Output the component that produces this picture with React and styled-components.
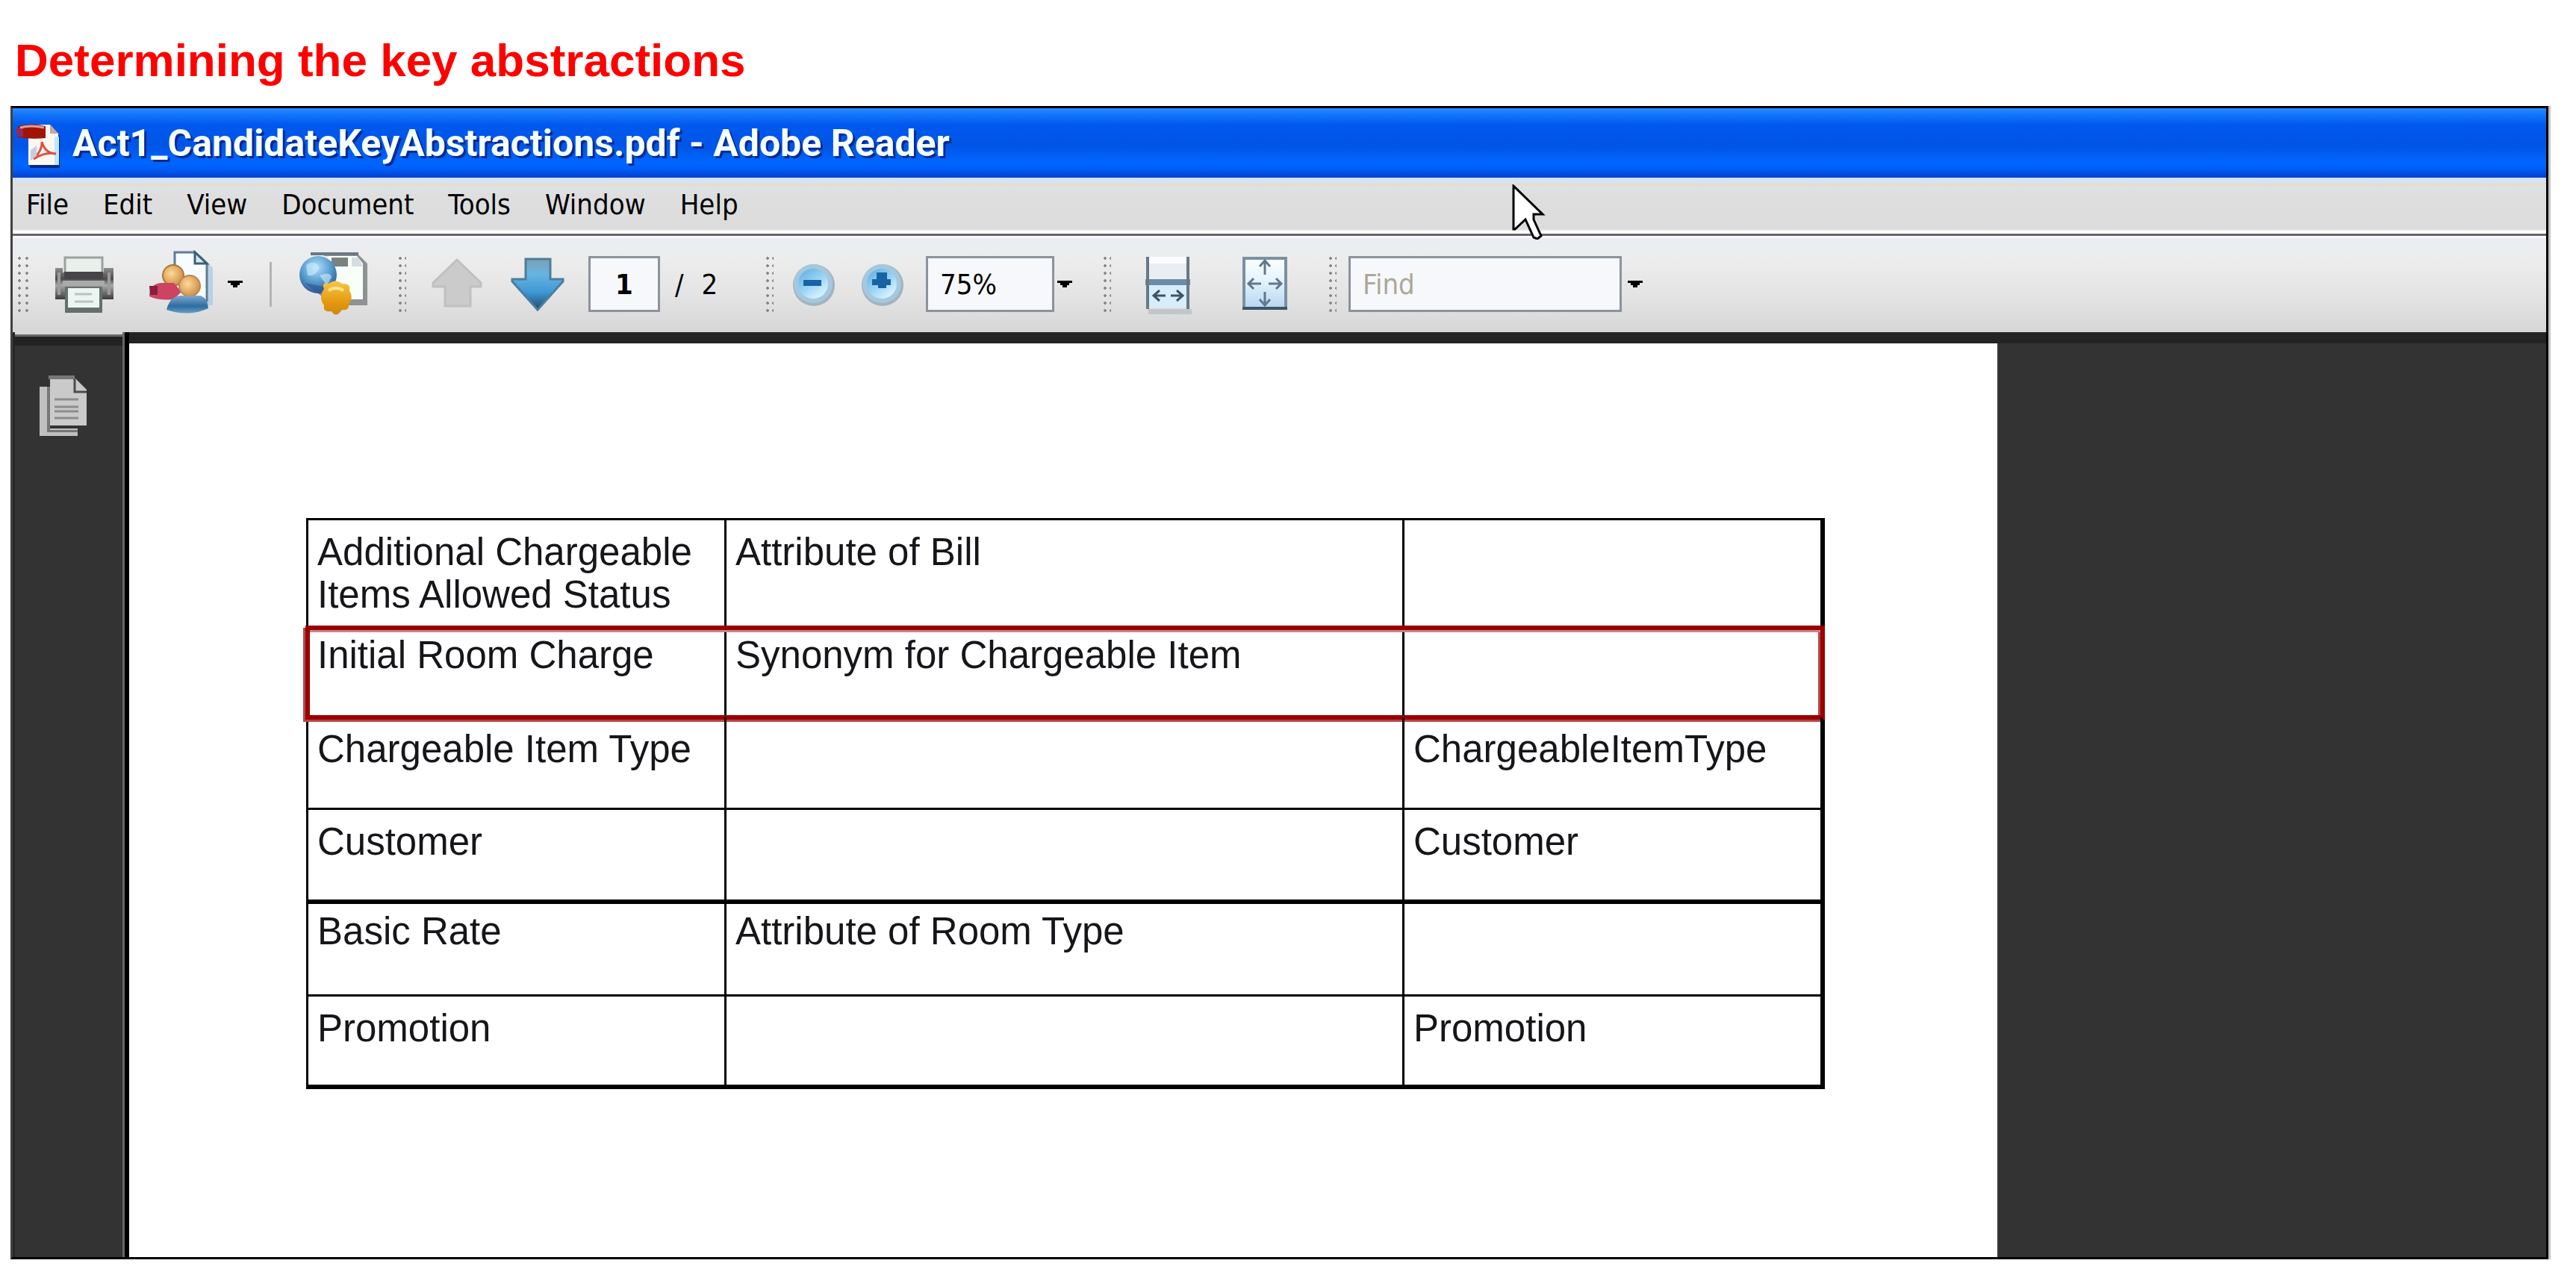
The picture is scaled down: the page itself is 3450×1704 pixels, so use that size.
import React from "react";
import styled, { createGlobalStyle, css } from "styled-components";

const uiFont = '"DejaVu Sans Condensed", "DejaVu Sans", sans-serif';
const docFont = '"Liberation Sans", Arial, sans-serif';

const GlobalStyle = createGlobalStyle`
  *, *::before, *::after { box-sizing: border-box; }
  body { margin: 0; background: #fff; }
`;

const Slide = styled.main`
  display: flex;
  flex-direction: column;
  min-height: 100vh;
  padding: 0 34px 17px 14px;
`;

const Heading = styled.h1`
  margin: 0;
  padding: 45px 6px 25px;
  font: bold 62px/72px ${docFont};
  color: #ff0000;
`;

const ReaderWindow = styled.section`
  position: relative;
  flex: 1;
  display: flex;
  flex-direction: column;
  border: 3px solid #000;
  border-left-color: #404040;
  box-shadow: 3px 0 0 0 #c4c4c4;
  margin-right: 3px;
`;

const TitleBar = styled.header`
  display: flex;
  align-items: center;
  gap: 16px;
  height: 93px;
  padding: 0 4px;
  background: linear-gradient(#2a8cff 0, #1478fb 8%, #0058ee 24%, #0055e6 55%, #0066ff 78%, #005ef6 88%, #0040cc 100%);
`;

const WindowTitle = styled.h2`
  margin: 0;
  font: bold 50px/56px Roboto, ${docFont};
  color: #f4ffff;
  text-shadow: 3px 3px 0 #0a2a94;
`;

const MenuBar = styled.nav`
  display: flex;
  align-items: center;
  gap: 46px;
  height: 78px;
  padding: 0 18px 4px;
  border-bottom: 3px solid #666;
  background: linear-gradient(#d3e2fb 0, #d6e2f6 6px, #e6decb 9px, #dde2e8 14px, #dedede 24px, #dcdcdc 69px, #fff 72px);
`;

const MenuItem = styled.button`
  padding: 0;
  border: 0;
  background: none;
  font: 38px/70px ${uiFont};
  color: #000;
`;

const Toolbar = styled.div`
  display: flex;
  align-items: center;
  height: 129px;
  padding: 0 0 3px 4px;
  border-top: 3px solid #f8f8fa;
  background: linear-gradient(#e9edf3 0, #ececec 25%, #e4e4e4 60%, #d6d6d6 100%);
`;

const spaced = css`
  flex: none;
  margin-left: ${(p) => p.$gap || 0}px;
`;

const Grip = styled.span`
  ${spaced}
  width: ${(p) => (p.$wide ? 20 : 12)}px;
  height: 80px;
  background: radial-gradient(circle, #8a8a8a 0 2px, transparent 2px) 0 0 / ${(p) => (p.$wide ? 10 : 8)}px 10px;
`;

const Divider = styled.span`
  ${spaced}
  width: 3px;
  height: 60px;
  background: #b4b4b4;
`;

const ToolButton = styled.button`
  ${spaced}
  display: flex;
  justify-content: center;
  align-items: center;
  width: ${(p) => p.$width}px;
  height: 100px;
  padding: 0;
  border: 0;
  background: none;

  svg { display: block; }
`;

const Field = styled.input`
  ${spaced}
  width: ${(p) => p.$width}px;
  height: 75px;
  padding: 0 ${(p) => (p.$center ? 0 : 16)}px;
  border: 3px solid #8c939c;
  border-radius: 0;
  background: #f7f8fb;
  font: ${(p) => (p.$center ? "bold " : "")}38px ${uiFont};
  text-align: ${(p) => (p.$center ? "center" : "left")};
  color: #000;

  &::placeholder { color: #aca899; opacity: 1; }
`;

const PageTotal = styled.span`
  ${spaced}
  display: flex;
  gap: 24px;
  width: 80px;
  font: 38px ${uiFont};
`;

const Workspace = styled.div`
  flex: 1;
  display: flex;
  background: #333;
`;

const Sidebar = styled.aside`
  flex: none;
  width: 156px;
  padding: 49px 32px;
  border-left: 3px solid #262626;
  border-right: 6px solid #000;
  background: linear-gradient(#d8d8d8 0 3px, #666 3px 6px, #222 6px 18px, transparent 18px);
  box-shadow: inset -3px 0 0 #666;
`;

const Viewer = styled.div`
  flex: 1;
  display: flex;
  min-width: 0;
  border-top: 15px solid #242424;
`;

const Paper = styled.article`
  flex: 0 1 2502px;
  min-width: 0;
  padding: 234px 231px 0 237px;
  background: #fff;
`;

const Table = styled.table`
  width: 100%;
  table-layout: fixed;
  border-collapse: separate;
  border-spacing: 0;
  border: 3px solid #000;
  font: 51px/57px ${docFont};
  color: #16161a;
`;

const SideCol = styled.col`
  width: 560px;
`;

const Row = styled.tr`
  position: relative;
  height: ${(p) => p.$height}px;

  td {
    padding: ${(p) => (p.$tight ? 8 : 14)}px 12px 0;
    border: solid #000;
    border-width: 0 3px ${(p) => (p.$heavy ? 6 : 3)}px 0;
    vertical-align: top;
    text-align: left;
  }

  ${(p) =>
    p.$marked &&
    css`
      td:first-child::after {
        content: "";
        position: absolute;
        inset: -3px -3px -3px -4px;
        border: 6px solid #990000;
        box-shadow: inset 0 3px 0 #cc8484, inset -3px 0 0 #b24848, -3px 3px 0 #b24848;
      }
    `}
`;

const PointerSvg = styled.svg`
  position: absolute;
  left: 2008px;
  top: 102px;
  pointer-events: none;
`;

const PdfIcon = () => (
  <svg width="60" height="66" viewBox="0 0 60 66" aria-hidden="true">
    <path d="M18 9H46L58 21V63H18Z" fill="#0a2a80" transform="translate(1 3)" />
    <path d="M17 8H46L57 20V62H17Z" fill="#fbf7f2" />
    <path d="M46 8L57 20H46Z" fill="#c9a79c" />
    <path d="M52 24H58V62H52Z" fill="#bfe8fb" />
    <path d="M3 10Q22 5 40 10V26Q20 28 3 25Z" fill="#a01408" />
    <path d="M0 12H10V24H2Z" fill="#8e2a5c" />
    <path d="M6 12Q20 8 38 12" stroke="#e0a090" strokeWidth="3" fill="none" />
    <path d="M24 54Q36 42 35 31Q40 47 54 47Q40 44 24 54Z" fill="none" stroke="#dd5240" strokeWidth="3" />
    <path d="M20 42L28 36V50L20 56Z" fill="#c6cbe0" />
  </svg>
);

const PrintIcon = () => (
  <svg width="80" height="84" viewBox="0 0 80 84" aria-hidden="true">
    <defs>
      <linearGradient id="printBody" x1="0" y1="0" x2="0" y2="1">
        <stop offset="0" stopColor="#8e8e8e" />
        <stop offset="0.35" stopColor="#4c4a4c" />
        <stop offset="0.55" stopColor="#a8a8a8" />
        <stop offset="1" stopColor="#3c3c3c" />
      </linearGradient>
    </defs>
    <path d="M14 6H64V28H14Z" fill="#e9f0ec" stroke="#9aa39f" strokeWidth="3" />
    <path d="M1 20H11V26H66V20H79V62H1Z" fill="url(#printBody)" />
    <path d="M13 25H65V35H13Z" fill="#464446" />
    <path d="M11 37H67V43H11Z" fill="#aaa" />
    <path d="M4 26H8V56H4ZM71 26H75V56H71Z" fill="#9b9b9b" />
    <path d="M14 45H64V80H14Z" fill="#65706b" />
    <path d="M18 47H60V73H18Z" fill="#ecf5f1" />
    <path d="M27 55H50M27 65H52" stroke="#bac4be" strokeWidth="3" />
  </svg>
);

const MeetingIcon = () => (
  <svg width="92" height="96" viewBox="0 0 92 96" aria-hidden="true">
    <defs>
      <radialGradient id="face" cx="0.4" cy="0.4" r="0.7">
        <stop offset="0" stopColor="#ffd898" />
        <stop offset="1" stopColor="#c8863c" />
      </radialGradient>
      <linearGradient id="coatBlue" x1="0" y1="0" x2="0" y2="1">
        <stop offset="0" stopColor="#7fa8cc" />
        <stop offset="0.6" stopColor="#2c6ca2" />
        <stop offset="1" stopColor="#6a9fc4" />
      </linearGradient>
    </defs>
    <path d="M44 9H76L92 26V76H44Z" fill="#a8c8e4" opacity="0.7" />
    <path d="M41 5H68L84 20V70H41Z" fill="#f6fcff" stroke="#5d7d92" strokeWidth="3" />
    <path d="M68 5V20H84Z" fill="#d7e8f0" stroke="#3e5f76" strokeWidth="3" />
    <circle cx="39" cy="36" r="14" fill="url(#face)" stroke="#a87838" strokeWidth="2" />
    <path d="M7 64Q8 46 24 46H40L50 58L40 68Q20 70 7 64Z" fill="#cc4460" />
    <path d="M7 50H18V62H8Z" fill="#8c1c40" />
    <circle cx="61" cy="50" r="14" fill="url(#face)" stroke="#b98850" strokeWidth="2" />
    <path d="M30 82Q34 65 48 63H76Q85 67 86 80Q60 92 30 82Z" fill="url(#coatBlue)" />
  </svg>
);

const GlobeIcon = () => (
  <svg width="96" height="96" viewBox="0 0 96 96" aria-hidden="true">
    <defs>
      <radialGradient id="globe" cx="0.45" cy="0.3" r="0.75">
        <stop offset="0" stopColor="#b2e0fa" />
        <stop offset="0.55" stopColor="#5499cc" />
        <stop offset="1" stopColor="#2c4c86" />
      </radialGradient>
      <linearGradient id="seal" x1="0" y1="0" x2="0" y2="1">
        <stop offset="0" stopColor="#f7c648" />
        <stop offset="0.7" stopColor="#e29408" />
        <stop offset="1" stopColor="#c98a18" />
      </linearGradient>
    </defs>
    <path d="M34 6H78L92 20V76H60V10H34Z" fill="#8d9394" />
    <path d="M40 10H78L86 20V68H40Z" fill="#f8fff8" />
    <path d="M44 12H66V24H44Z" fill="#7c8080" />
    <path d="M71 12H80L86 24H71Z" fill="#d4dedf" />
    <circle cx="26" cy="35" r="25" fill="url(#globe)" />
    <path d="M8 46L26 60L34 66L38 52Z" fill="#33589a" opacity="0.7" />
    <path d="M16 5H80V9H16Z" fill="#6b7888" />
    <path d="M10 22Q22 14 28 26Q22 38 12 36ZM28 36Q42 30 44 38L38 50Z" fill="#cdeeff" opacity="0.6" />
    <path d="M34 54Q30 44 40 47Q50 40 58 47Q70 46 68 56Q74 66 67 74Q68 84 58 82Q50 94 44 84Q32 86 34 76Q26 66 34 54Z" fill="url(#seal)" />
    <path d="M40 56Q50 50 60 56" stroke="#ffe48c" strokeWidth="4" fill="none" />
  </svg>
);

const ArrowIcon = ({ up }) => (
  <svg width="72" height="72" viewBox="0 0 72 72" aria-hidden="true">
    <defs>
      <linearGradient id="arrowBlue" x1="0" y1="0" x2="0" y2="1">
        <stop offset="0" stopColor="#7c9fb4" />
        <stop offset="0.3" stopColor="#66b4e0" />
        <stop offset="0.65" stopColor="#3f98d6" />
        <stop offset="1" stopColor="#1c4a68" />
      </linearGradient>
    </defs>
    {up ? (
      <path d="M36 3L68 34V39H54V65H20V39H4V34Z" fill="#cbcbcb" stroke="#c0c0c0" strokeWidth="3" />
    ) : (
      <path d="M20 2H53V29H70V32L36 70L2 32V29H20Z" fill="url(#arrowBlue)" stroke="#4e7d9c" strokeWidth="3" />
    )}
  </svg>
);

const ZoomIcon = ({ plus }) => (
  <svg width="60" height="60" viewBox="0 0 60 60" aria-hidden="true">
    <defs>
      <linearGradient id="zoomFill" x1="0" y1="0" x2="0.7" y2="1">
        <stop offset="0" stopColor="#58aee0" />
        <stop offset="0.6" stopColor="#9fd6f6" />
        <stop offset="1" stopColor="#dcf5ff" />
      </linearGradient>
    </defs>
    <circle cx="30" cy="31" r="28" fill="#a3b3bf" />
    <circle cx="29" cy="29" r="26" fill="#a4c8de" />
    <circle cx="29" cy="29" r="20" fill="url(#zoomFill)" />
    <path d={plus ? "M16 23H22V14H36V23H41V31H35V35H24V31H16Z" : "M16 24H40V32H16Z"} fill="#1763a4" />
  </svg>
);

const FitWidthIcon = () => (
  <svg width="64" height="84" viewBox="0 0 64 84" aria-hidden="true">
    <path d="M4 75H62V82H4Z" fill="#c2c6ca" />
    <path d="M3 5H58V35H3Z" fill="#e9eef4" />
    <path d="M3 5H58V14H3Z" fill="#fbfcfe" />
    <path d="M3 38H58V73H3Z" fill="#d8edfb" />
    <path d="M0 35H60V43H0Z" fill="#6c8ba4" />
    <path d="M3 5V75M57 5V75" stroke="#667988" strokeWidth="4" />
    <path d="M11 57H27M34 57H50M19 50L11 57L19 64M42 50L50 57L42 64" stroke="#3c5468" strokeWidth="3" fill="none" />
  </svg>
);

const FitPageIcon = () => (
  <svg width="64" height="76" viewBox="0 0 64 76" aria-hidden="true">
    <defs>
      <linearGradient id="fitPage" x1="0" y1="0" x2="0" y2="1">
        <stop offset="0" stopColor="#fbfffe" />
        <stop offset="0.45" stopColor="#e4f3fc" />
        <stop offset="1" stopColor="#b6d6f2" />
      </linearGradient>
    </defs>
    <path d="M4 3H60V70H4Z" fill="url(#fitPage)" stroke="#7b90a2" strokeWidth="4" />
    <path d="M2 70H62" stroke="#3e5468" strokeWidth="4" />
    <path d="M32 6V25M32 66V48M10 37H27M37 37H54M25 14L32 6L39 14M25 58L32 66L39 58M17 30L10 37L17 44M47 30L54 37L47 44" stroke="#62788a" strokeWidth="3" fill="none" />
  </svg>
);

const CaretIcon = () => (
  <svg width="20" height="12" viewBox="0 0 20 12" aria-hidden="true">
    <path d="M0 1H20V4H16V7H13V10H7V7H4V4H0Z" fill="#000" />
  </svg>
);

const PagesIcon = () => (
  <svg width="68" height="84" viewBox="0 0 68 84" aria-hidden="true">
    <path d="M1 16H14V72H52V82H1Z" fill="#c0c0c0" />
    <path d="M11 16H15V74H52V77H11Z" fill="#777" />
    <path d="M15 2H46L64 20V68H15Z" fill="#cacaca" />
    <path d="M13 1H48V6H13Z" fill="#777" />
    <path d="M48 5V23H64" stroke="#4c4c4c" strokeWidth="3" fill="none" />
    <path d="M50 7L63 20H50Z" fill="#c8c8c8" />
    <path d="M21 33H53M21 43H53M21 49H53M21 58H53" stroke="#8c8c8c" strokeWidth="3" />
  </svg>
);

const Pointer = () => (
  <PointerSvg width="45" height="74" viewBox="0 0 45 74" aria-hidden="true">
    <path d="M2 2L41 40H29V47L39 69L34 73L29 71L18 47L4 60H2Z" fill="#fff" stroke="#000" strokeWidth="3" />
  </PointerSvg>
);

const menus = ["File", "Edit", "View", "Document", "Tools", "Window", "Help"];

const rows = [
  { height: 144, cells: ["Additional Chargeable Items Allowed Status", "Attribute of Bill", ""] },
  { height: 120, cells: ["Initial Room Charge", "Synonym for Chargeable Item", ""], marked: true, tight: true },
  { height: 124, cells: ["Chargeable Item Type", "", "ChargeableItemType"] },
  { height: 126, cells: ["Customer", "", "Customer"], heavy: true },
  { height: 124, cells: ["Basic Rate", "Attribute of Room Type", ""], tight: true },
  { height: 121, cells: ["Promotion", "", "Promotion"] },
];

export default function App() {
  return (
    <Slide>
      <GlobalStyle />
      <Heading>Determining the key abstractions</Heading>
      <ReaderWindow>
        <TitleBar>
          <PdfIcon />
          <WindowTitle>Act1_CandidateKeyAbstractions.pdf - Adobe Reader</WindowTitle>
        </TitleBar>
        <MenuBar>
          {menus.map((name) => (
            <MenuItem key={name} type="button">{name}</MenuItem>
          ))}
        </MenuBar>
        <Toolbar>
          <Grip $wide />
          <ToolButton $gap={32} $width={80} aria-label="Print"><PrintIcon /></ToolButton>
          <ToolButton $gap={40} $width={92} aria-label="Collaborate"><MeetingIcon /></ToolButton>
          <ToolButton $gap={20} $width={20} aria-label="Collaborate options"><CaretIcon /></ToolButton>
          <Divider $gap={36} />
          <ToolButton $gap={36} $width={96} aria-label="Online services"><GlobeIcon /></ToolButton>
          <Grip $gap={36} />
          <ToolButton $gap={32} $width={72} aria-label="Previous page"><ArrowIcon up /></ToolButton>
          <ToolButton $gap={36} $width={72} aria-label="Next page"><ArrowIcon /></ToolButton>
          <Field $gap={32} $width={96} $center aria-label="Page number" defaultValue="1" />
          <PageTotal $gap={20}><span>/</span><span>2</span></PageTotal>
          <Grip $gap={40} />
          <ToolButton $gap={24} $width={60} aria-label="Zoom out"><ZoomIcon /></ToolButton>
          <ToolButton $gap={32} $width={60} aria-label="Zoom in"><ZoomIcon plus /></ToolButton>
          <Field $gap={28} $width={172} aria-label="Zoom level" defaultValue="75%" />
          <ToolButton $gap={4} $width={20} aria-label="Zoom levels"><CaretIcon /></ToolButton>
          <Grip $gap={40} />
          <ToolButton $gap={46} $width={64} aria-label="Fit width"><FitWidthIcon /></ToolButton>
          <ToolButton $gap={64} $width={64} aria-label="Fit page"><FitPageIcon /></ToolButton>
          <Grip $gap={52} />
          <Field $gap={16} $width={366} aria-label="Find" placeholder="Find" />
          <ToolButton $gap={8} $width={20} aria-label="Find options"><CaretIcon /></ToolButton>
        </Toolbar>
        <Workspace>
          <Sidebar>
            <ToolButton $width={68} aria-label="Pages"><PagesIcon /></ToolButton>
          </Sidebar>
          <Viewer>
            <Paper>
              <Table>
                <colgroup>
                  <SideCol />
                  <col />
                  <SideCol />
                </colgroup>
                <tbody>
                  {rows.map((row) => (
                    <Row
                      key={row.cells[0]}
                      $height={row.height}
                      $marked={row.marked}
                      $tight={row.tight}
                      $heavy={row.heavy}
                    >
                      {row.cells.map((text, i) => (
                        <td key={i}>{text}</td>
                      ))}
                    </Row>
                  ))}
                </tbody>
              </Table>
            </Paper>
          </Viewer>
        </Workspace>
        <Pointer />
      </ReaderWindow>
    </Slide>
  );
}
